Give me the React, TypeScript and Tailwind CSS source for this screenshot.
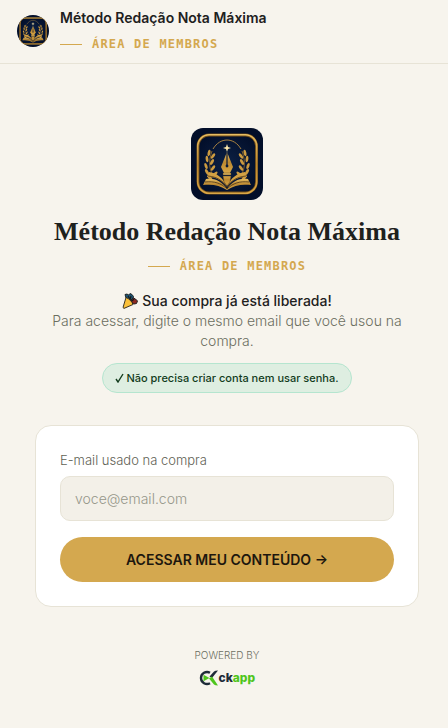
import { useState } from 'react';

const LAUREL = [
  [19, 50, -45], [16, 44, -30], [15, 38, -20], [16, 31, -5], [18, 25, 10],
  [24, 46, 45], [22, 40, 35], [21, 34, 30], [22, 28, 35],
];

function Emblem({ className = '' }: { className?: string }) {
  const leaves = LAUREL.map(([x, y, r]) => (
    <ellipse key={`${x}-${y}`} cx={x} cy={y} rx="1.4" ry="3.2" transform={`rotate(${r} ${x} ${y})`} />
  ));
  return (
    <svg viewBox="0 0 72 72" className={className} role="img" aria-label="Método Redação Nota Máxima">
      <defs>
        <linearGradient id="gold" x1="0" y1="0" x2="0" y2="1">
          <stop offset="0" stopColor="#e6bd62" />
          <stop offset="0.5" stopColor="#bd8930" />
          <stop offset="1" stopColor="#d9a746" />
        </linearGradient>
        <radialGradient id="navy">
          <stop offset="0" stopColor="#0c2044" />
          <stop offset="1" stopColor="#020e29" />
        </radialGradient>
      </defs>
      <rect width="72" height="72" fill="url(#navy)" />
      <rect x="7" y="7" width="58.5" height="58" rx="11" fill="none" stroke="#765019" strokeWidth="2.8" />
      <rect x="6.7" y="6.7" width="59" height="58.5" rx="11.5" fill="none" stroke="url(#gold)" strokeWidth="1.6" />
      <path d="M22 21C29 9 43 9 50 21" fill="none" stroke="#a88241" strokeWidth="1" />
      <path d="M36 16l1 3 3 1-3 1-1 3-1-3-3-1 3-1z" fill="#fbe8ac" />
      <g fill="#cc9b40">
        <path d="M24 50C18 43 17 34 21 23" fill="none" stroke="#9b712b" strokeWidth="0.8" />
        {leaves}
        <g transform="translate(72 0) scale(-1 1)">
          <path d="M24 50C18 43 17 34 21 23" fill="none" stroke="#9b712b" strokeWidth="0.8" />
          {leaves}
        </g>
      </g>
      <path d="M36 24l6 15-3 6h-6l-3-6z" fill="url(#gold)" />
      <path d="M36 25v12" stroke="#0b1a38" strokeWidth="1.2" />
      <circle cx="36" cy="38" r="1.4" fill="#0b1a38" />
      <path d="M36 61C31 53 23 50 15 51l-3 6c9-1 17 0 24 5 7-5 15-6 24-5l-3-6c-8-1-16 2-21 10z" fill="url(#gold)" />
      <path d="M36 59C32 49 25 45 18 44l-2 5c9 0 15 3 20 10 5-7 11-10 20-10l-2-5c-7 1-14 5-18 15z" fill="#d3a144" />
      <path d="M17 48c9 1 14 4 19 11 5-7 10-10 19-11M14 54c9-1 16 1 22 7 6-6 13-8 22-7" fill="none" stroke="#473219" strokeWidth="0.8" />
      <path d="M32 45h8v2h-8zM32 48h8l-1 6-3 4-3-4z" fill="url(#gold)" stroke="#473219" strokeWidth="0.4" />
    </svg>
  );
}

function PartyPopper() {
  return (
    <svg viewBox="0 0 16 16" className="size-4" aria-hidden="true">
      <path d="M3 1.5l2-.5 1.5 1L8 .5l2 1 1.5 2-1 4-3 .5L4 5z" fill="#1d5573" stroke="#16191b" strokeWidth="0.9" />
      <path d="M9 7l2.5-2 2 1 2 2-1 2.5-2.5.5-2-1z" fill="#8c2920" stroke="#16191b" strokeWidth="0.9" />
      <path d="M6 3l2 3M9 3l-1 4M12 6l-2 2" stroke="#16191b" strokeWidth="1.2" />
      <path d="M4 4.5c3 1 6 4 7 7L2 15.4 1 14.5z" fill="#fbc13a" stroke="#26221c" strokeWidth="0.9" />
    </svg>
  );
}

function CheckMark() {
  return (
    <svg viewBox="0 0 9 10" className="h-2.5 w-[9px]" aria-hidden="true">
      <path d="M1 6l2 3 5-8" fill="none" stroke="currentColor" strokeWidth="1.4" />
    </svg>
  );
}

function CkappLogo() {
  return (
    <svg viewBox="0 0 58 18" className="h-[18px] w-[58px]" role="img" aria-label="ckapp">
      <path d="M12 3.8A6 6 0 1 0 12 14.2" fill="none" stroke="#1e2b38" strokeWidth="2.4" />
      <path d="M11.5 7.5L16 2.5Q17 1.6 20 1.6L14 9z" fill="#1e2b38" />
      <path d="M5.5 5.8l6 3.2-6 3.2z" fill="#4fc51c" />
      <path d="M11 9.5l3-2 6 8.9q-3 0-4-1z" fill="#4fc51c" />
      <text x="20.5" y="13" fontFamily="Inter, sans-serif" fontWeight="800" fontSize="12" fill="#1e2b38">
        ck<tspan fill="#4fc51c">app</tspan>
      </text>
    </svg>
  );
}

function MembersLabel() {
  return (
    <p className="flex items-center gap-2.5 font-['DejaVu_Sans_Mono',monospace] text-xs leading-4 font-bold tracking-widest text-[#d4a84f] uppercase">
      <span className="h-px w-[22px] bg-[#d4a84f]" />
      Área de membros
    </p>
  );
}

export default function App() {
  const [email, setEmail] = useState('');

  return (
    <div className="min-h-screen bg-[#f7f4ed] font-[Inter,sans-serif] text-[#1e211d]">
      <header className="flex items-center gap-[11px] border-b border-[#e7e3d6] pt-2.5 pr-4 pb-[11px] pl-[17px]">
        <Emblem className="size-8 rounded-full" />
        <div className="flex flex-col gap-2.5">
          <p className="text-sm leading-4 font-semibold">Método Redação Nota Máxima</p>
          <MembersLabel />
        </div>
      </header>

      <main className="pt-16 pr-[29px] pb-9 pl-[35px]">
        <div className="mx-auto flex max-w-sm flex-col items-center">
          <Emblem className="size-[72px] rounded-xl" />
          <h1 className="mt-4 text-center font-['Liberation_Serif',serif] text-[26px] leading-8 font-bold">
            Método Redação Nota Máxima
          </h1>
          <div className="mt-2.5">
            <MembersLabel />
          </div>

          <div className="mt-[17px] px-4 text-center text-sm leading-5">
            <p className="flex items-center justify-center gap-1 font-medium">
              <PartyPopper />
              Sua compra já está liberada!
            </p>
            <p className="font-light text-[#6b6e60]">
              Para acessar, digite o mesmo email que você usou na compra.
            </p>
          </div>

          <p className="mt-3 flex items-center gap-0.5 rounded-full border border-[#b5e5cf] bg-[#deeee1] px-3 py-1.5 text-[11px] leading-4 font-medium text-[#123c1c]">
            <CheckMark />
            Não precisa criar conta nem usar senha.
          </p>

          <form
            className="mt-8 w-full rounded-2xl border border-[#e7e3d6] bg-white p-6"
            onSubmit={e => e.preventDefault()}
          >
            <label htmlFor="email" className="block text-[13px] leading-5 font-light text-[#5f6255]">
              E-mail usado na compra
            </label>
            <input
              id="email"
              type="email"
              value={email}
              onChange={e => setEmail(e.target.value)}
              placeholder="voce@email.com"
              className="mt-1.5 h-[45px] w-full rounded-[10px] border border-[#e7e3d6] bg-[#f3f0e8] px-3.5 text-sm font-light placeholder:text-[#96978a]"
            />
            <button
              type="submit"
              className="mt-4 h-[45px] w-full rounded-full bg-[#d4a84f] text-sm font-semibold text-[#1d170e]"
            >
              ACESSAR MEU CONTEÚDO →
            </button>
          </form>

          <footer className="mt-10 flex flex-col items-center gap-1.5">
            <p className="text-[10px] leading-4 font-light text-[#6b6e60]">POWERED BY</p>
            <CkappLogo />
          </footer>
        </div>
      </main>
    </div>
  );
}
